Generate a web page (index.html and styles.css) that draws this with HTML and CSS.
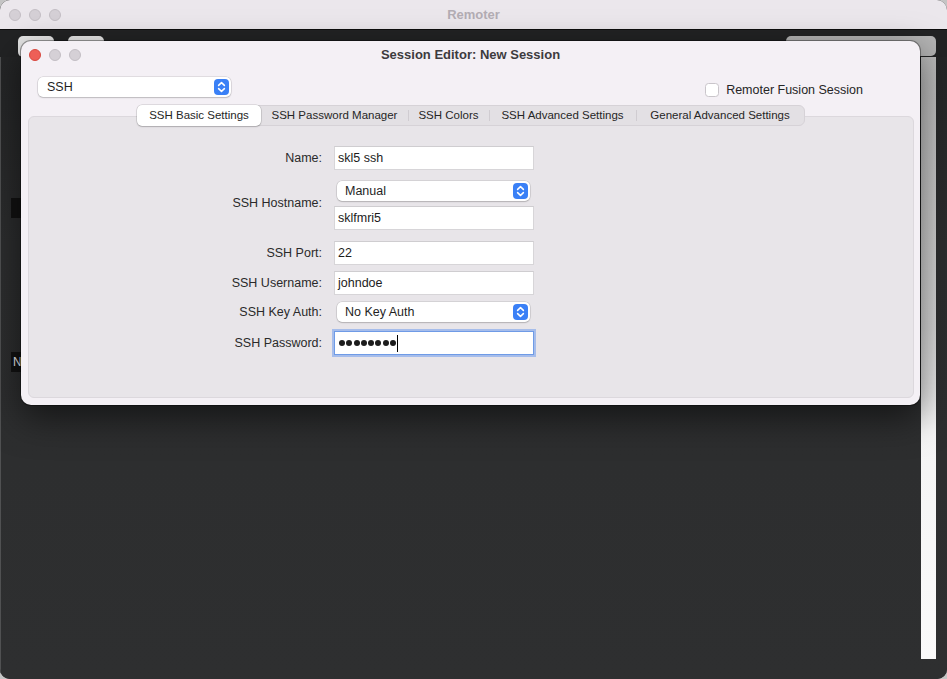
FILE: index.html
```html
<!DOCTYPE html>
<html>
<head>
<meta charset="utf-8">
<title>Remoter</title>
<link rel="stylesheet" href="styles.css">
</head>
<body>
<div class="desktop">
  <div class="main-window">
    <div class="mw-titlebar">
      <div class="lights">
        <span class="light off"></span><span class="light off"></span><span class="light off"></span>
      </div>
      <div class="mw-title">Remoter</div>
      <div></div>
    </div>
    <div class="mw-toolbar">
      <span class="tb-btn"></span>
      <span class="tb-btn"></span>
      <span class="tb-search"></span>
    </div>
    <div class="mw-body">
      <div class="left-col">
        <span class="blk blk1"></span>
        <span class="blk blk2">N</span>
      </div>
      <div class="center"></div>
      <div class="white-col"></div>
    </div>
  </div>

  <div class="dialog">
    <div class="dlg-titlebar">
      <div class="lights dlg-lights">
        <span class="light close"></span><span class="light off"></span><span class="light off"></span>
      </div>
      <div class="dlg-title">Session Editor: New Session</div>
      <div></div>
    </div>

    <div class="dlg-top">
      <div class="popup popup-type">
        <span class="popup-text">SSH</span>
        <span class="stepper"><svg width="15" height="16" viewBox="0 0 15 16"><path d="M4.6 6.4 L7.5 3.6 L10.4 6.4 M4.6 9.6 L7.5 12.4 L10.4 9.6" fill="none" stroke="#fff" stroke-width="1.5" stroke-linecap="round" stroke-linejoin="round"/></svg></span>
      </div>
      <label class="check-row"><span class="checkbox"></span><span class="check-label">Remoter Fusion Session</span></label>
    </div>

    <div class="tabs-wrap">
      <div class="segmented">
        <div class="seg active">SSH Basic Settings</div>
        <div class="seg">SSH Password Manager</div>
        <div class="seg sep">SSH Colors</div>
        <div class="seg sep">SSH Advanced Settings</div>
        <div class="seg sep">General Advanced Settings</div>
      </div>
      <div class="tab-box">
        <div class="form">
          <div class="row r-name">
            <div class="lbl">Name:</div>
            <div class="field">skl5 ssh</div>
          </div>
          <div class="row r-host">
            <div class="lbl lbl-host">SSH Hostname:</div>
            <div class="stack">
              <div class="popup popup-form">
                <span class="popup-text">Manual</span>
                <span class="stepper"><svg width="15" height="16" viewBox="0 0 15 16"><path d="M4.6 6.4 L7.5 3.6 L10.4 6.4 M4.6 9.6 L7.5 12.4 L10.4 9.6" fill="none" stroke="#fff" stroke-width="1.5" stroke-linecap="round" stroke-linejoin="round"/></svg></span>
              </div>
              <div class="field">sklfmri5</div>
            </div>
          </div>
          <div class="row r-port">
            <div class="lbl">SSH Port:</div>
            <div class="field">22</div>
          </div>
          <div class="row r-user">
            <div class="lbl">SSH Username:</div>
            <div class="field">johndoe</div>
          </div>
          <div class="row r-key">
            <div class="lbl">SSH Key Auth:</div>
            <div class="popup popup-form">
              <span class="popup-text">No Key Auth</span>
              <span class="stepper"><svg width="15" height="16" viewBox="0 0 15 16"><path d="M4.6 6.4 L7.5 3.6 L10.4 6.4 M4.6 9.6 L7.5 12.4 L10.4 9.6" fill="none" stroke="#fff" stroke-width="1.5" stroke-linecap="round" stroke-linejoin="round"/></svg></span>
            </div>
          </div>
          <div class="row r-pass">
            <div class="lbl">SSH Password:</div>
            <div class="field focused">
              <span class="dots"><span class="dot"></span><span class="dot"></span><span class="dot"></span><span class="dot"></span><span class="dot"></span><span class="dot"></span><span class="dot"></span><span class="dot"></span></span><span class="caret"></span>
            </div>
          </div>
        </div>
      </div>
    </div>
  </div>
</div>
</body>
</html>
```

FILE: styles.css
```css
html, body {
  margin: 0;
  padding: 0;
}
body {
  width: 947px;
  height: 679px;
  overflow: hidden;
  background: #c4c4c4;
  font-family: "Liberation Sans", Arial, sans-serif;
}
.desktop {
  position: relative;
  width: 947px;
  height: 679px;
}

/* ---------- background window ---------- */
.main-window {
  width: 947px;
  height: 679px;
  border-radius: 10px;
  overflow: hidden;
  display: flex;
  flex-direction: column;
  background: #2d2e2f;
  box-shadow: inset 1px 0 0 #5a5a5a;
}
.mw-titlebar {
  height: 29px;
  flex: none;
  background: #ebe7ec;
  border-bottom: 1px solid #0d0d0d;
  display: grid;
  grid-template-columns: 1fr auto 1fr;
  align-items: center;
}
.lights {
  display: flex;
  gap: 8px;
  padding-left: 9px;
}
.light {
  width: 12px;
  height: 12px;
  border-radius: 50%;
  box-sizing: border-box;
}
.light.off {
  background: #d5d0d6;
  border: 0.5px solid #c3bec4;
}
.light.close {
  background: #ee5f57;
  border: 0.5px solid #d8483f;
}
.mw-title {
  font-size: 13px;
  font-weight: bold;
  color: #b3adb4;
}
.mw-toolbar {
  height: 27px;
  flex: none;
  background: #222324;
  display: flex;
  align-items: flex-start;
  padding: 6px 11px 0 18px;
  gap: 14px;
  box-sizing: border-box;
}
.tb-btn {
  width: 36px;
  height: 21px;
  border-radius: 5px;
  background: #e9e9e9;
}
.tb-search {
  margin-left: auto;
  width: 150px;
  height: 20px;
  border-radius: 5px;
  background: #b4b4b4;
}
.mw-body {
  flex: 1;
  display: flex;
  background: linear-gradient(180deg, #242526 0%, #2c2d2e 30%, #2e2f30 100%);
}
.left-col {
  width: 21px;
  display: flex;
  flex-direction: column;
  align-items: flex-end;
  box-shadow: inset 1px 0 0 #505152;
}
.blk {
  width: 10px;
  height: 20px;
  background: #121212;
  color: #f0f0f0;
  font-size: 12px;
  line-height: 20px;
  overflow: hidden;
  padding-left: 2px;
  box-sizing: border-box;
}
.blk1 { margin-top: 141px; }
.blk2 { margin-top: 134px; }
.center { flex: 1; }
.white-col {
  width: 15px;
  margin: 0 11px 20px 0;
  background: linear-gradient(180deg, #b9b9b9 0%, #d8d8d8 45%, #f4f4f4 62%, #fafafa 100%);
}

/* ---------- dialog ---------- */
.dialog {
  position: absolute;
  left: 21px;
  top: 41px;
  width: 899px;
  height: 364px;
  border-radius: 10px;
  background: #f4f0f5;
  box-shadow: 0 0 0 1px rgba(0, 0, 0, 0.35), 0 12px 36px rgba(0, 0, 0, 0.55);
  display: flex;
  flex-direction: column;
  box-sizing: border-box;
}
.dlg-titlebar {
  height: 27px;
  flex: none;
  display: grid;
  grid-template-columns: 1fr auto 1fr;
  align-items: center;
}
.dlg-lights {
  padding-left: 8px;
}
.dlg-title {
  font-size: 13px;
  font-weight: bold;
  color: #3d3b3e;
}
.dlg-top {
  margin-top: 9px;
  padding: 0 57px 0 17px;
  display: flex;
  justify-content: space-between;
  align-items: flex-start;
}
.popup {
  height: 20px;
  box-sizing: border-box;
  background: #ffffff;
  border-radius: 5px;
  box-shadow: 0 0 0 0.5px rgba(0, 0, 0, 0.16), 0 1px 1.5px rgba(0, 0, 0, 0.16);
  display: flex;
  align-items: center;
  justify-content: space-between;
  padding: 0 2px 0 9px;
  font-size: 12.5px;
  color: #1f1f1f;
}
.popup-type {
  width: 193px;
}
.popup-form {
  width: 193px;
  margin-left: 3px;
  padding-left: 8px;
}
.stepper {
  width: 15px;
  height: 16px;
  border-radius: 4px;
  background: #3a80f6;
  display: flex;
}
.check-row {
  display: flex;
  align-items: center;
  gap: 7px;
  margin-top: 6px;
}
.checkbox {
  width: 14px;
  height: 14px;
  box-sizing: border-box;
  background: #ffffff;
  border: 1px solid #c9c5ca;
  border-radius: 3.5px;
}
.check-label {
  font-size: 12.5px;
  color: #252525;
}

/* ---------- tabs ---------- */
.tabs-wrap {
  flex: 1;
  display: flex;
  flex-direction: column;
  align-items: center;
  padding: 0 6px 7px 7px;
  margin-top: 8px;
}
.segmented {
  position: relative;
  z-index: 1;
  display: grid;
  grid-template-columns: 123px 147px 81px 147px 168px;
  height: 21px;
  box-sizing: border-box;
  background: #e3e0e4;
  border: 1px solid #d6d2d7;
  border-radius: 6px;
  margin-bottom: -10px;
}
.seg {
  position: relative;
  display: flex;
  align-items: center;
  justify-content: center;
  padding-bottom: 2px;
  box-sizing: border-box;
  font-size: 11.5px;
  color: #262626;
  white-space: nowrap;
}
.seg.active {
  background: #ffffff;
  border-radius: 5px;
  margin: -1px 0 -1px -1px;
  box-shadow: 0 0 0 0.5px rgba(0, 0, 0, 0.18), 0 1px 1.5px rgba(0, 0, 0, 0.18);
}
.seg.sep::before {
  content: "";
  position: absolute;
  left: 0;
  top: 4px;
  width: 1px;
  height: 11px;
  background: #d0ccd1;
}
.tab-box {
  align-self: stretch;
  flex: 1;
  background: #e8e5e9;
  border: 1px solid #dcd8dd;
  border-radius: 6px;
  padding: 29px 0 0 133px;
}

/* ---------- form ---------- */
.form {
  display: flex;
  flex-direction: column;
}
.row {
  display: flex;
  align-items: center;
}
.lbl {
  width: 160px;
  margin-right: 12px;
  text-align: right;
  font-size: 12.5px;
  color: #2a2a2a;
}
.lbl-host {
  margin-top: -6px;
}
.field {
  width: 200px;
  height: 24px;
  box-sizing: border-box;
  background: #ffffff;
  border: 1px solid #d7d5d8;
  border-top-color: #cfcdd0;
  padding-left: 3px;
  font-size: 12.5px;
  line-height: 22px;
  color: #1c1c1c;
  display: flex;
  align-items: center;
}
.stack {
  display: flex;
  flex-direction: column;
  gap: 5px;
}
.r-host { margin-top: 11px; }
.r-port { margin-top: 11px; }
.r-user { margin-top: 6px; }
.r-key { margin-top: 7px; }
.r-pass { margin-top: 9px; }
.field.focused {
  border: 1px solid #6f9be6;
  box-shadow: 0 0 0 2px rgba(112, 156, 236, 0.55);
  padding-left: 4px;
}
.dots {
  display: flex;
  gap: 1.3px;
}
.dot {
  width: 6px;
  height: 6px;
  border-radius: 50%;
  background: #1c1c1c;
}
.caret {
  width: 1px;
  height: 17px;
  background: #000000;
  margin-left: 1px;
}
```
